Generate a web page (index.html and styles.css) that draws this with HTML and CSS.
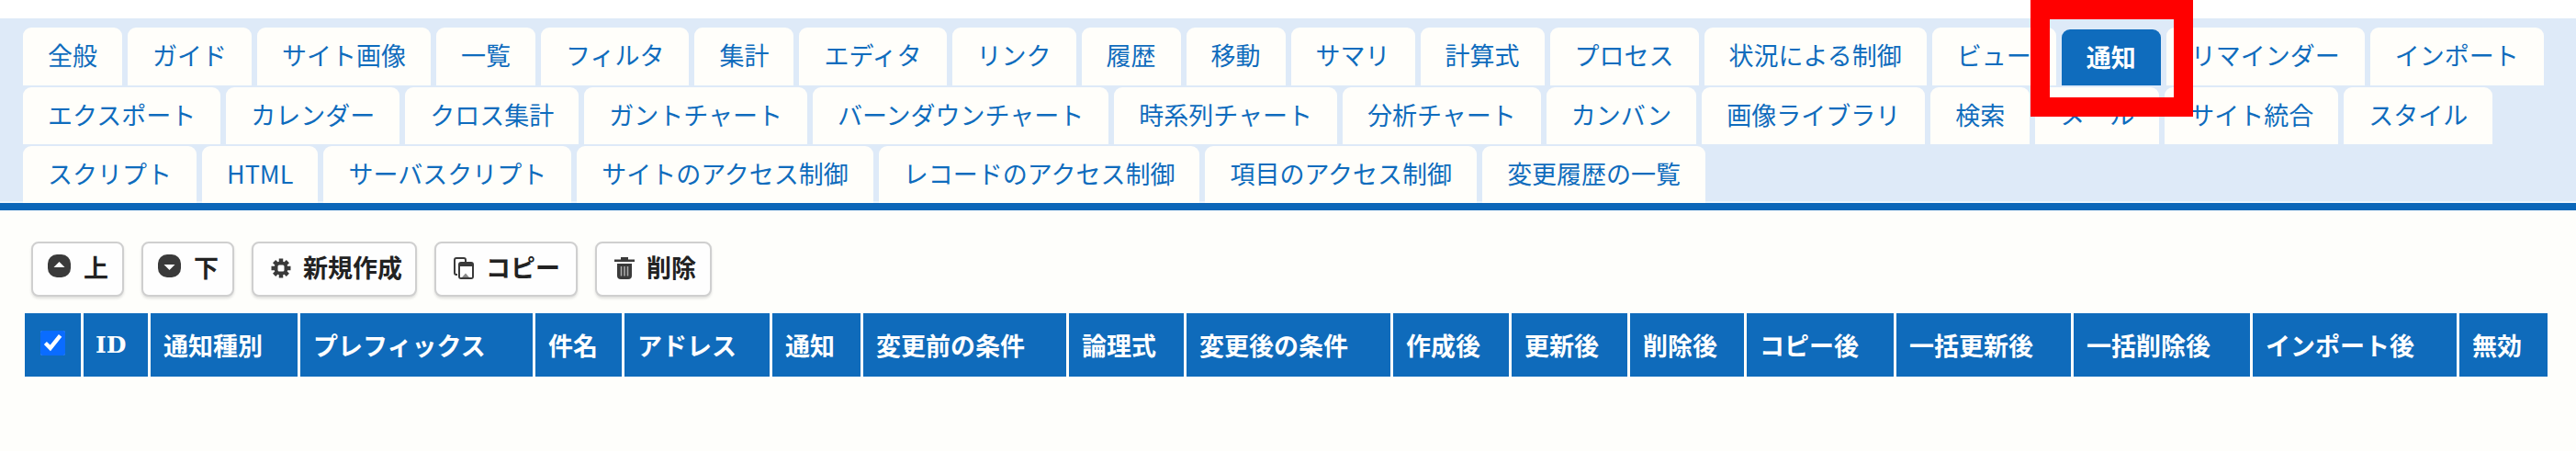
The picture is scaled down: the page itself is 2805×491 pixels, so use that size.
FILE: index.html
```html
<!DOCTYPE html>
<html lang="ja">

<head>
    <meta charset="UTF-8" />
    <title>通知</title>
    <link rel="stylesheet" href="styles.css">
</head>

<body>
    <div class="tab-bar">
        <a class="tab">全般</a>
        <a class="tab">ガイド</a>
        <a class="tab">サイト画像</a>
        <a class="tab">一覧</a>
        <a class="tab">フィルタ</a>
        <a class="tab">集計</a>
        <a class="tab">エディタ</a>
        <a class="tab">リンク</a>
        <a class="tab">履歴</a>
        <a class="tab">移動</a>
        <a class="tab">サマリ</a>
        <a class="tab">計算式</a>
        <a class="tab">プロセス</a>
        <a class="tab">状況による制御</a>
        <a class="tab">ビュー</a>
        <a class="tab active">通知</a>
        <a class="tab">リマインダー</a>
        <a class="tab">インポート</a>
        <a class="tab">エクスポート</a>
        <a class="tab">カレンダー</a>
        <a class="tab">クロス集計</a>
        <a class="tab">ガントチャート</a>
        <a class="tab">バーンダウンチャート</a>
        <a class="tab">時系列チャート</a>
        <a class="tab">分析チャート</a>
        <a class="tab">カンバン</a>
        <a class="tab">画像ライブラリ</a>
        <a class="tab">検索</a>
        <a class="tab">メール</a>
        <a class="tab">サイト統合</a>
        <a class="tab">スタイル</a>
        <a class="tab">スクリプト</a>
        <a class="tab">HTML</a>
        <a class="tab">サーバスクリプト</a>
        <a class="tab">サイトのアクセス制御</a>
        <a class="tab">レコードのアクセス制御</a>
        <a class="tab">項目のアクセス制御</a>
        <a class="tab">変更履歴の一覧</a>
    </div>

    <!-- annotation over the active tab -->
    <div class="highlight"></div>

    <div class="content">
        <div class="toolbar">
            <button class="btn btn-arrow">
                <svg class="icon icon-round" viewBox="0 0 25 25">
                    <rect width="25" height="25" rx="10" fill="#3a3a3a" />
                    <path d="M12.5 8 L18.5 14 H6.5 Z" fill="#fff" />
                </svg>
                上
            </button>
            <button class="btn btn-arrow">
                <svg class="icon icon-round" viewBox="0 0 25 25">
                    <rect width="25" height="25" rx="10" fill="#3a3a3a" />
                    <path d="M12.5 17 L18.5 11 H6.5 Z" fill="#fff" />
                </svg>
                下
            </button>
            <button class="btn">
                <svg class="icon" viewBox="0 0 22 22">
                    <path d="M11 0.5 V21.5 M0.5 11 H21.5 M3.6 3.6 L18.4 18.4 M18.4 3.6 L3.6 18.4" stroke="#3a3a3a" stroke-width="4.5" />
                    <circle cx="11" cy="11" r="7.5" fill="#3a3a3a" />
                    <rect x="7.5" y="7.5" width="7" height="7" rx="1.5" fill="#fff" />
                </svg>
                新規作成
            </button>
            <button class="btn btn-copy">
                <svg class="icon" viewBox="0 0 22 24">
                    <path d="M4 19 H3 Q1 19 1 17 V3 Q1 1 3 1 H11 Q13 1 13 3 V5" fill="none" stroke="#3a3a3a" stroke-width="2" />
                    <rect x="5" y="5" width="17" height="19" rx="3" fill="#3a3a3a" />
                    <rect x="7" y="10" width="13" height="12" fill="#fff" />
                    <path d="M9 22 L13 17.5 L17 22 Z" fill="#8a8a8a" />
                </svg>
                コピー
            </button>
            <button class="btn btn-delete">
                <svg class="icon" viewBox="0 0 22 24">
                    <path d="M7 0 H15 V2.5 H22 V5 H0 V2.5 H7 Z" fill="#3a3a3a" />
                    <path d="M3 7 H19 V20 Q19 24 15 24 H7 Q3 24 3 20 Z" fill="#3a3a3a" />
                    <path d="M7.5 10 V20.5 M11 10 V20.5 M14.5 10 V20.5" stroke="#aaa" stroke-width="1.6" />
                </svg>
                削除
            </button>
        </div>

        <table class="grid">
            <thead>
                <tr>
                    <th class="check-cell"><input type="checkbox" checked></th>
                    <th class="id-cell">ID</th>
                    <th>通知種別</th>
                    <th>プレフィックス</th>
                    <th>件名</th>
                    <th>アドレス</th>
                    <th>通知</th>
                    <th>変更前の条件</th>
                    <th>論理式</th>
                    <th>変更後の条件</th>
                    <th>作成後</th>
                    <th>更新後</th>
                    <th>削除後</th>
                    <th>コピー後</th>
                    <th>一括更新後</th>
                    <th>一括削除後</th>
                    <th>インポート後</th>
                    <th>無効</th>
                </tr>
            </thead>
        </table>
    </div>
</body>

</html>
```

FILE: styles.css
```css
body {
    margin: 0;
    padding-top: 20px;
    background-color: white;
    font-family: "Noto Sans CJK JP", "Noto Sans", sans-serif;
    font-size: 27px;
}

.tab-bar {
    display: flex;
    flex-wrap: wrap;
    align-content: flex-start;
    gap: 2px 6px;
    height: 191px;
    padding: 10px 0 0 25px;
    overflow: hidden;
    background-color: #deeaf8;
    border-bottom: 8px solid #0b66b8;
    box-shadow: inset 0 -2px 0 #edf4fc;
}

.tab {
    box-sizing: border-box;
    height: 62.5px;
    padding: 0 27px;
    line-height: 60px;
    color: #0f6cbd;
    background-color: #fffefa;
    border-radius: 9px 9px 0 0;
}

.tab.active {
    height: 60.5px;
    margin-top: 2px;
    font-weight: bold;
    color: white;
    background-color: #0f6cbd;
}

.highlight {
    position: absolute;
    top: 0;
    left: 2211px;
    box-sizing: border-box;
    width: 177px;
    height: 127px;
    border: 21px solid #ff0000;
}

.content {
    box-sizing: border-box;
    height: 262px;
    padding: 34px 31px 0 27px;
    background-color: #fefefb;
}

.toolbar {
    display: flex;
    gap: 19px;
    padding-left: 7px;
}

.btn {
    display: flex;
    align-items: center;
    gap: 13px;
    box-sizing: border-box;
    height: 60px;
    padding: 0 14px 5px 19px;
    font-family: inherit;
    font-size: 27px;
    font-weight: bold;
    color: #222;
    background-color: #fefefe;
    border: 2px solid #cfcfcf;
    border-radius: 8px;
    box-shadow: 0 2px 3px rgba(0, 0, 0, 0.12);
}

.btn-arrow {
    gap: 14px;
    padding-right: 15px;
    padding-left: 16px;
}

.btn-copy {
    padding-right: 17px;
}

.btn-delete {
    padding-right: 15px;
}

.icon {
    flex: none;
    width: 22px;
    height: 22px;
    margin-top: 3px;
}

.btn-copy .icon,
.btn-delete .icon {
    height: 24px;
}

.icon-round {
    width: 25px;
    height: 25px;
    margin-top: -2px;
}

.grid {
    display: block;
    margin-top: 18px;
    border-spacing: 0;
}

.grid thead {
    display: block;
}

.grid tr {
    display: grid;
    grid-template-columns: 61px 70px 160px 253px 94px 158px 96px 221px 125px 222px 126px 126px 124px 160px 190px 192px 222px 96px;
    gap: 3px;
}

.grid th {
    box-sizing: border-box;
    height: 69px;
    padding: 0 0 0 14px;
    line-height: 69px;
    text-align: left;
    white-space: nowrap;
    color: white;
    font-weight: bold;
    background-color: #0f6bbb;
}

.grid .id-cell {
    font-family: "DejaVu Serif", serif;
    font-size: 25px;
    padding-left: 13px;
}

.grid .check-cell {
    display: flex;
    align-items: center;
    padding-left: 17px;
}

.check-cell input {
    width: 27px;
    height: 27px;
    margin: -5px 0 0 0;
    accent-color: #0a6cff;
}
```
